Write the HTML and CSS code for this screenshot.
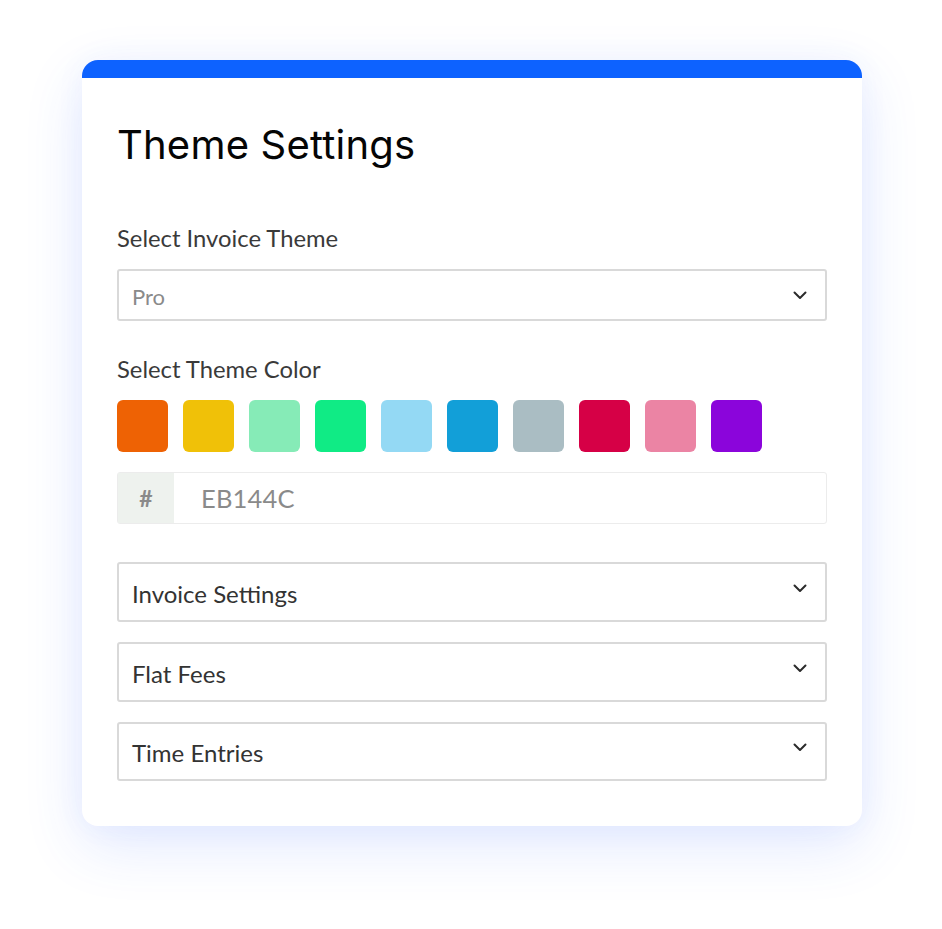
FILE: index.html
```html
<!DOCTYPE html>
<html>
<head>
<meta charset="utf-8">
<link rel="stylesheet" href="styles.css">
</head>
<body>
<div class="stage">
  <div class="card">
    <div class="card-bar"></div>
    <div class="card-body">
      <h1 class="title">Theme Settings</h1>
      <div class="field">
        <div class="label">Select Invoice Theme</div>
        <div class="select">
          <span class="select-value">Pro</span>
          <svg class="chev" width="14" height="9" viewBox="0 0 14 9"><path d="M1.5 1.5 L7 7 L12.5 1.5" fill="none" stroke="#2b2b2b" stroke-width="2" stroke-linecap="round" stroke-linejoin="round"/></svg>
        </div>
      </div>
      <div class="field field-color">
        <div class="label">Select Theme Color</div>
        <div class="swatches">
          <span class="swatch" style="background:#EE6204"></span>
          <span class="swatch" style="background:#F0C108"></span>
          <span class="swatch" style="background:#86EBB7"></span>
          <span class="swatch" style="background:#10EB85"></span>
          <span class="swatch" style="background:#94D9F4"></span>
          <span class="swatch" style="background:#129FD8"></span>
          <span class="swatch" style="background:#AABDC3"></span>
          <span class="swatch" style="background:#D60046"></span>
          <span class="swatch" style="background:#EB84A4"></span>
          <span class="swatch" style="background:#8B05DB"></span>
        </div>
        <div class="hex">
          <span class="hex-addon">#</span>
          <span class="hex-value">EB144C</span>
        </div>
      </div>
      <div class="accordions">
        <div class="acc acc-1">
          <span class="acc-title">Invoice Settings</span>
          <svg class="chev" width="14" height="9" viewBox="0 0 14 9"><path d="M1.5 1.5 L7 7 L12.5 1.5" fill="none" stroke="#2b2b2b" stroke-width="2" stroke-linecap="round" stroke-linejoin="round"/></svg>
        </div>
        <div class="acc acc-2">
          <span class="acc-title">Flat Fees</span>
          <svg class="chev" width="14" height="9" viewBox="0 0 14 9"><path d="M1.5 1.5 L7 7 L12.5 1.5" fill="none" stroke="#2b2b2b" stroke-width="2" stroke-linecap="round" stroke-linejoin="round"/></svg>
        </div>
        <div class="acc acc-3">
          <span class="acc-title">Time Entries</span>
          <svg class="chev" width="14" height="9" viewBox="0 0 14 9"><path d="M1.5 1.5 L7 7 L12.5 1.5" fill="none" stroke="#2b2b2b" stroke-width="2" stroke-linecap="round" stroke-linejoin="round"/></svg>
        </div>
      </div>
    </div>
  </div>
</div>
</body>
</html>
```
FILE: styles.css
```css
* { box-sizing: border-box; }
html, body { margin: 0; padding: 0; background: #ffffff; }
body { width: 942px; height: 929px; overflow: hidden; font-family: "Lato", "Noto Sans", sans-serif; }
.stage { padding: 60px 0 0 82px; }
.card {
  width: 780px;
  height: 766px;
  background: #ffffff;
  border-radius: 16px;
  overflow: hidden;
  box-shadow: 0 20px 60px rgba(50, 100, 255, 0.14), 0 0 30px rgba(50, 100, 255, 0.05);
}
.card-bar { height: 18px; background: #0D62FF; }
.card-body { padding: 42px 35px 0 35px; }
.title {
  margin: 0;
  font-family: "Inter", "Noto Sans", sans-serif;
  font-weight: 400;
  font-size: 40px;
  line-height: 50px;
  color: #050505;
  letter-spacing: 0.2px;
}
.field { margin-top: 54px; }
.field-color { margin-top: 34px; }
.label {
  font-size: 23.8px;
  line-height: 28px;
  color: #3a3a3a;
  margin-bottom: 17px;
}
.select {
  height: 52px;
  border: 2px solid #d9d9d9;
  border-radius: 3px;
  display: flex;
  align-items: center;
  justify-content: space-between;
  padding: 0 18px 0 13px;
}
.select-value { font-size: 22px; color: #8a8a8a; padding-top: 2px; }
.swatches { display: flex; gap: 15px; }
.swatch { width: 51px; height: 52px; border-radius: 6px; display: block; }
.hex {
  margin-top: 20px;
  height: 52px;
  border: 1.5px solid #ececec;
  border-radius: 3px;
  display: flex;
  align-items: stretch;
}
.hex-addon {
  width: 56px;
  background: #eef2ee;
  display: flex;
  align-items: center;
  justify-content: center;
  font-size: 23px;
  font-weight: 700;
  color: #8a8a8a;
}
.hex-value {
  display: flex;
  align-items: center;
  padding-left: 27px;
  font-size: 25.5px;
  color: #8a8a8a;
  letter-spacing: 0.2px;
}
.accordions { margin-top: 38px; display: flex; flex-direction: column; gap: 20px; }
.acc {
  height: 60px;
  border: 2px solid #d9d9d9;
  border-radius: 3px;
  display: flex;
  align-items: center;
  justify-content: space-between;
  padding: 0 18px 0 13px;
}
.acc-3 { height: 59px; }
.acc-title { font-size: 24px; color: #333333; padding-top: 2px; }
.acc .chev { margin-top: -8px; }
```
